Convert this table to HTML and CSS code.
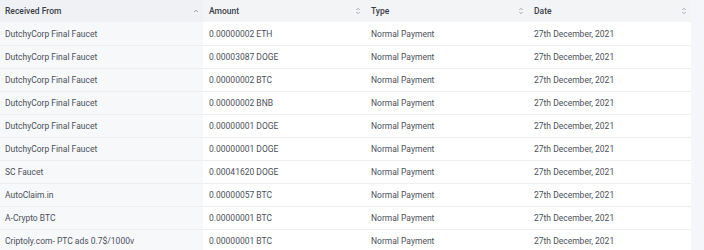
FILE: index.html
```html
<!DOCTYPE html>
<html>
<head>
<meta charset="utf-8">
<link rel="stylesheet" href="styles.css">
</head>
<body>
<div class="page">
  <table class="tbl">
    <colgroup><col class="c1"><col class="c2"><col class="c3"><col class="c4"></colgroup>
    <thead>
      <tr>
        <th class="c1"><div class="hd"><span>Received From</span><svg class="ic" viewBox="0 0 8 8" width="8" height="8"><path d="M2.2 5 L4 3.2 L5.8 5" fill="none" stroke="#8a8f98" stroke-width="0.9"/></svg></div></th>
        <th><div class="hd"><span>Amount</span><svg class="ic" viewBox="0 0 8 10" width="8" height="10"><path d="M2.3 4 L4 2.3 L5.7 4 M2.3 6 L4 7.7 L5.7 6" fill="none" stroke="#9aa0a8" stroke-width="0.9"/></svg></div></th>
        <th><div class="hd"><span>Type</span><svg class="ic" viewBox="0 0 8 10" width="8" height="10"><path d="M2.3 4 L4 2.3 L5.7 4 M2.3 6 L4 7.7 L5.7 6" fill="none" stroke="#9aa0a8" stroke-width="0.9"/></svg></div></th>
        <th><div class="hd"><span>Date</span><svg class="ic" viewBox="0 0 8 10" width="8" height="10"><path d="M2.3 4 L4 2.3 L5.7 4 M2.3 6 L4 7.7 L5.7 6" fill="none" stroke="#9aa0a8" stroke-width="0.9"/></svg></div></th>
      </tr>
    </thead>
    <tbody>
      <tr><td class="c1">DutchyCorp Final Faucet</td><td>0.00000002 ETH</td><td>Normal Payment</td><td>27th December, 2021</td></tr>
      <tr><td class="c1">DutchyCorp Final Faucet</td><td>0.00003087 DOGE</td><td>Normal Payment</td><td>27th December, 2021</td></tr>
      <tr><td class="c1">DutchyCorp Final Faucet</td><td>0.00000002 BTC</td><td>Normal Payment</td><td>27th December, 2021</td></tr>
      <tr><td class="c1">DutchyCorp Final Faucet</td><td>0.00000002 BNB</td><td>Normal Payment</td><td>27th December, 2021</td></tr>
      <tr><td class="c1">DutchyCorp Final Faucet</td><td>0.00000001 DOGE</td><td>Normal Payment</td><td>27th December, 2021</td></tr>
      <tr><td class="c1">DutchyCorp Final Faucet</td><td>0.00000001 DOGE</td><td>Normal Payment</td><td>27th December, 2021</td></tr>
      <tr><td class="c1">SC Faucet</td><td>0.00041620 DOGE</td><td>Normal Payment</td><td>27th December, 2021</td></tr>
      <tr><td class="c1">AutoClaim.in</td><td>0.00000057 BTC</td><td>Normal Payment</td><td>27th December, 2021</td></tr>
      <tr><td class="c1">A-Crypto BTC</td><td>0.00000001 BTC</td><td>Normal Payment</td><td>27th December, 2021</td></tr>
      <tr><td class="c1">Criptoly.com- PTC ads 0.7$/1000v</td><td>0.00000001 BTC</td><td>Normal Payment</td><td>27th December, 2021</td></tr>
    </tbody>
  </table>
</div>
</body>
</html>
```
FILE: styles.css
```css
html, body {
  margin: 0;
  padding: 0;
  background: #f4f6fa;
}
.page {
  width: 691px;
  background: #ffffff;
  height: 250px;
  overflow: hidden;
}
.tbl {
  width: 691px;
  border-collapse: separate;
  border-spacing: 0;
  table-layout: fixed;
  font-family: Roboto, "Liberation Sans", sans-serif;
  font-size: 8.5px;
  color: #4b5059;
}
col.c1 { width: 203px; }
col.c2 { width: 162px; }
col.c3 { width: 163px; }
col.c4 { width: 163px; }
.tbl th {
  box-sizing: border-box;
  background: #f3f4f6;
  height: 22px;
  padding: 0 3px 0 6px;
  text-align: left;
  font-weight: 500;
  color: #3a3f47;
}
.tbl th.c1 { background: #f0f1f4; padding-left: 5px; }
.hd {
  display: flex;
  align-items: center;
  justify-content: space-between;
}
.ic { display: block; }
.tbl td {
  box-sizing: border-box;
  height: 23px;
  padding: 0 5px 0 6px;
  border-top: 1px solid #eceef2;
  white-space: nowrap;
}
.tbl td.c1 { background: #f7f8fa; padding-left: 5px; }
.tbl tbody tr:first-child td { border-top: none; }
```
